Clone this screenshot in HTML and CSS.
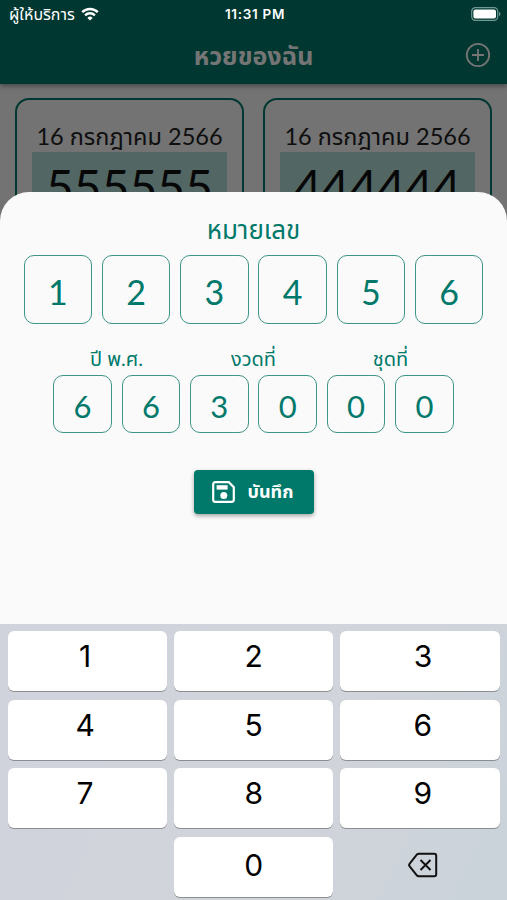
FILE: index.html
```
<!DOCTYPE html>
<html lang="th">
<head>
    <meta charset="UTF-8">
    <meta name="viewport" content="width=device-width, initial-scale=1.0">
    <title>หวยของฉัน</title>
    <link rel="stylesheet" href="styles.css">
</head>
<body>
    <div class="screen">
        <div class="appbar">
            <h1>หวยของฉัน</h1>
            <svg class="add" viewBox="0 0 26 26" width="26" height="26">
                <circle cx="13" cy="13" r="11.2"/>
                <path d="M13 7v12M7 13h12"/>
            </svg>
        </div>
        <div class="tickets">
            <div class="ticket">
                <p class="date">16 กรกฎาคม 2566</p>
                <p class="number">555555</p>
            </div>
            <div class="ticket">
                <p class="date">16 กรกฎาคม 2566</p>
                <p class="number">444444</p>
            </div>
        </div>

        <div class="scrim"></div>

        <div class="status">
            <div class="carrier">
                <span>ผู้ให้บริการ</span>
                <svg viewBox="0 0 18 14" width="18" height="14">
                    <path d="M1.2 5.2a11 11 0 0 1 15.6 0"/>
                    <path d="M4.1 8.3a7 7 0 0 1 9.8 0"/>
                    <path class="dot" d="M9 13.6l-2.6-2.7a3.7 3.7 0 0 1 5.2 0z"/>
                </svg>
            </div>
            <div class="time">11:31 PM</div>
            <svg class="battery" viewBox="0 0 30 14" width="30" height="14">
                <rect class="case" x="0.7" y="0.7" width="26" height="12.6" rx="3.6"/>
                <rect class="level" x="2.4" y="2.4" width="22.6" height="9.2" rx="2"/>
                <path class="tip" d="M28 4.8c2 .8 2 3.6 0 4.4z"/>
            </svg>
        </div>

        <div class="sheet">
            <h2>หมายเลข</h2>
            <div class="row big">
                <div class="box">1</div>
                <div class="box">2</div>
                <div class="box">3</div>
                <div class="box">4</div>
                <div class="box">5</div>
                <div class="box">6</div>
            </div>
            <div class="labels">
                <span>ปี พ.ศ.</span>
                <span>งวดที่</span>
                <span>ชุดที่</span>
            </div>
            <div class="row small">
                <div class="box">6</div>
                <div class="box">6</div>
                <div class="box">3</div>
                <div class="box">0</div>
                <div class="box">0</div>
                <div class="box">0</div>
            </div>
            <button class="save">
                <svg viewBox="0 0 24 24" width="24" height="24">
                    <path class="disk" d="M3.2 2.2h13.6l5 5v12.6a2 2 0 0 1-2 2H3.2a2 2 0 0 1-2-2V4.2a2 2 0 0 1 2-2z"/>
                    <rect x="4.6" y="5.2" width="11" height="4.4"/>
                    <circle cx="11.8" cy="15.6" r="3.5"/>
                </svg>
                <span>บันทึก</span>
            </button>

            <div class="keyboard">
                <div class="key">1</div>
                <div class="key">2</div>
                <div class="key">3</div>
                <div class="key">4</div>
                <div class="key">5</div>
                <div class="key">6</div>
                <div class="key">7</div>
                <div class="key">8</div>
                <div class="key">9</div>
                <div class="key blank"></div>
                <div class="key zero">0</div>
                <div class="key blank">
                    <svg viewBox="0 0 30 26" width="30" height="26">
                        <path d="M10.8 1.7h15.4a2 2 0 0 1 2 2v18.6a2 2 0 0 1-2 2H10.8a2.5 2.5 0 0 1-1.8-.8L1.9 14.6a2.3 2.3 0 0 1 0-3.2L9 2.5a2.5 2.5 0 0 1 1.8-.8z"/>
                        <path d="M12.5 8l10 10M22.500 8l-10 10"/>
                    </svg>
                </div>
            </div>
        </div>
    </div>
</body>
</html>
```
FILE: styles.css
```
* {
    box-sizing: border-box;
}
body {
    margin: 0;
    font-family: "Lato", "Noto Sans Thai", "Noto Sans", sans-serif;
}
h1, h2, p {
    margin: 0;
    font-weight: normal;
}
.screen {
    position: relative;
    width: 507px;
    height: 900px;
    overflow: hidden;
    background: #fafafa;
}
.appbar {
    position: relative;
    height: 84px;
    padding-top: 29px;
    background: #00796b;
    box-shadow: 0 2px 5px rgba(0, 0, 0, 0.4);
    display: flex;
    align-items: center;
    justify-content: center;
    color: #fff;
}
.appbar h1 {
    font-size: 25px;
    font-weight: bold;
}
.add {
    position: absolute;
    right: 16px;
    top: 42px;
    fill: none;
    stroke: #fff;
    stroke-width: 1.8;
}
.tickets {
    display: flex;
    justify-content: space-between;
    padding: 14px 15px 0 15px;
}
.ticket {
    width: 229px;
    height: 190px;
    padding: 22px 15px 0;
    border: 2px solid #00796b;
    border-radius: 14px;
    text-align: center;
}
.date {
    display: flex;
    justify-content: center;
    height: 30px;
    line-height: 28px;
    font-size: 23.5px;
    white-space: nowrap;
    color: #222;
}
.number {
    height: 70px;
    line-height: 70px;
    background: #b2dfdb;
    font-size: 48px;
    color: #111;
}
.scrim {
    position: absolute;
    inset: 0;
    background: rgba(0, 0, 0, 0.54);
}
.status {
    position: absolute;
    top: 0;
    left: 0;
    right: 0;
    height: 27px;
    padding: 0 6px 0 9px;
    display: grid;
    grid-template-columns: 1fr auto 1fr;
    align-items: center;
    color: #fff;
    font-family: "Inter", "Noto Sans Thai", sans-serif;
    font-size: 13.5px;
}
.carrier {
    display: flex;
    align-items: center;
    gap: 6px;
    font-size: 16px;
    line-height: 20px;
}
.carrier svg {
    fill: none;
    stroke: #fff;
    stroke-width: 2.4;
}
.carrier .dot {
    fill: #fff;
    stroke: none;
}
.time {
    font-weight: 600;
    letter-spacing: 0.7px;
}
.battery {
    justify-self: end;
}
.case {
    fill: none;
    stroke: #6f9a92;
    stroke-width: 1.2;
}
.level {
    fill: #fff;
}
.tip {
    fill: #6f9a92;
}
.sheet {
    position: absolute;
    top: 192px;
    left: 0;
    right: 0;
    bottom: 0;
    display: flex;
    flex-direction: column;
    align-items: center;
    background: #fafafa;
    border-radius: 29px 29px 0 0;
    color: #00796b;
}
.sheet h2 {
    height: 63px;
    line-height: 74px;
    font-size: 26px;
}
.row {
    display: flex;
    gap: 9.8px;
}
.box {
    display: flex;
    align-items: center;
    justify-content: center;
    border: 1.4px solid #3d9587;
    border-radius: 10px;
}
.big .box {
    width: 68.5px;
    height: 68.5px;
    padding-top: 4px;
    font-size: 34px;
}
.small .box {
    width: 58.6px;
    height: 58.6px;
    padding-top: 4px;
    font-size: 31px;
}
.labels {
    display: grid;
    grid-template-columns: repeat(3, 137px);
    height: 51px;
    padding-top: 18px;
    line-height: 32px;
    font-size: 20px;
    text-align: center;
}
.save {
    display: flex;
    align-items: center;
    justify-content: center;
    gap: 12px;
    width: 120px;
    height: 44px;
    margin-top: 37px;
    padding: 0 2px 0 0;
    border: 0;
    border-radius: 4px;
    background: #00796b;
    box-shadow: 0 2px 4px rgba(0, 0, 0, 0.35);
    color: #fff;
    font-family: inherit;
    font-size: 18px;
    font-weight: bold;
}
.save svg {
    fill: #fff;
}
.save .disk {
    fill: none;
    stroke: #fff;
    stroke-width: 2.2;
}
.keyboard {
    display: grid;
    grid-template-columns: repeat(3, 1fr);
    grid-auto-rows: 60px;
    gap: 8.6px 7px;
    width: 100%;
    height: 276px;
    margin-top: auto;
    padding: 7px 7.500px 0 8px;
    background: linear-gradient(115deg, #d0d3dc, #d1d4da 60%, #cad3da);
}
.key {
    display: flex;
    align-items: center;
    justify-content: center;
    padding-bottom: 10px;
    border-radius: 6px;
    background: #fff;
    box-shadow: 0 1px 0 #8b8e93;
    color: #000;
    font-family: "Inter", sans-serif;
    font-size: 30px;
}
.key:nth-child(3n+1) {
    padding-right: 5px;
}
.key:nth-child(3n) {
    padding-left: 6px;
}
.zero {
    padding-bottom: 3px;
}
.blank {
    padding-bottom: 3px;
    background: none;
    box-shadow: none;
}
.key svg {
    fill: none;
    stroke: #111;
    stroke-width: 2;
}
```
